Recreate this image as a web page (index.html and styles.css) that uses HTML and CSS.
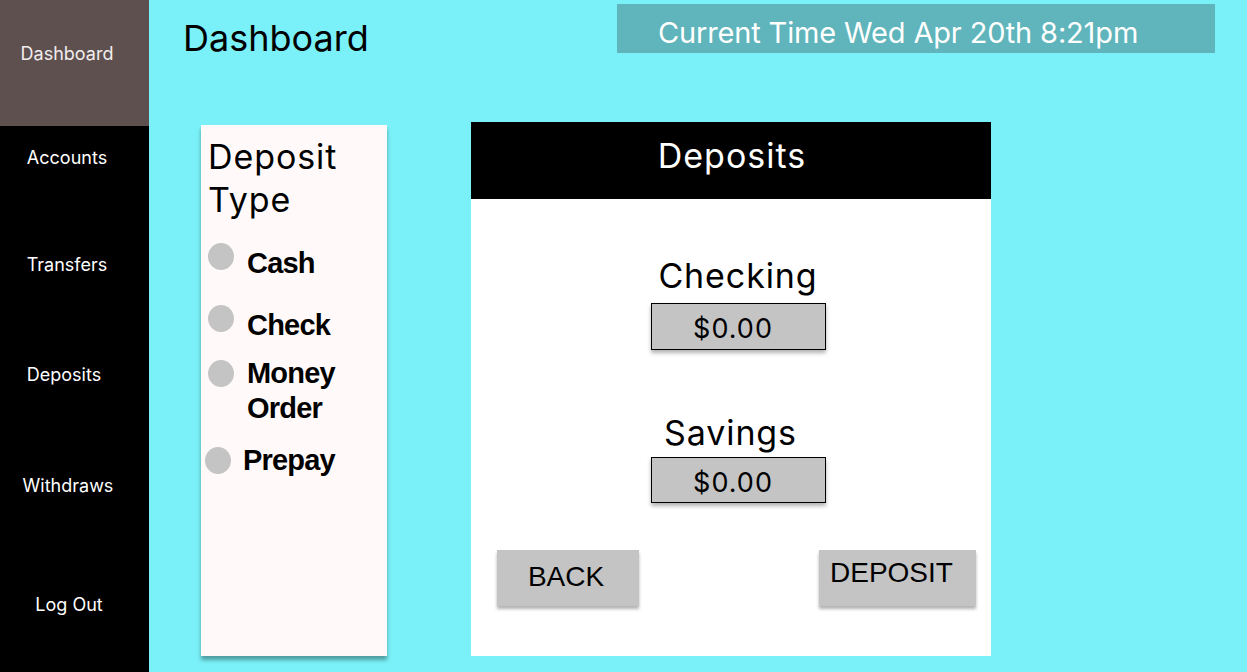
FILE: index.html
```html
<!DOCTYPE html>
<html>
<head>
<meta charset="utf-8">
<link rel="stylesheet" href="styles.css">
</head>
<body>
<div class="app">
  <nav class="sidebar">
    <div class="nav-item active nav-dashboard">Dashboard</div>
    <div class="nav-item nav-accounts">Accounts</div>
    <div class="nav-item nav-transfers">Transfers</div>
    <div class="nav-item nav-deposits">Deposits</div>
    <div class="nav-item nav-withdraws">Withdraws</div>
    <div class="nav-item nav-logout">Log Out</div>
  </nav>
  <main class="main">
    <header class="topbar">
      <h1 class="page-title">Dashboard</h1>
      <div class="clock">Current Time Wed Apr 20th 8:21pm</div>
    </header>
    <section class="content">
      <div class="type-panel">
        <div class="type-title">Deposit Type</div>
        <div class="option opt-cash"><span class="radio"></span><span class="opt-label">Cash</span></div>
        <div class="option opt-check"><span class="radio"></span><span class="opt-label">Check</span></div>
        <div class="option opt-money"><span class="radio"></span><span class="opt-label">Money<br>Order</span></div>
        <div class="option opt-prepay"><span class="radio"></span><span class="opt-label">Prepay</span></div>
      </div>
      <div class="deposit-panel">
        <div class="deposit-head">Deposits</div>
        <div class="deposit-body">
          <div class="account acc-checking">
            <div class="acc-name">Checking</div>
            <div class="amount">$0.00</div>
          </div>
          <div class="account acc-savings">
            <div class="acc-name">Savings</div>
            <div class="amount">$0.00</div>
          </div>
          <div class="actions">
            <div class="btn btn-back">BACK</div>
            <div class="btn btn-deposit">DEPOSIT</div>
          </div>
        </div>
      </div>
    </section>
  </main>
</div>
</body>
</html>
```
FILE: styles.css
```css
* { box-sizing: border-box; }
html, body { margin: 0; padding: 0; }
body {
  width: 1247px;
  height: 672px;
  overflow: hidden;
  font-family: Inter, "Noto Sans", sans-serif;
  background: #7af1f8;
}
.app { display: flex; width: 1247px; height: 672px; }

.sidebar {
  width: 149px;
  flex: none;
  background: #000;
  color: #fff;
  display: flex;
  flex-direction: column;
}
.nav-item {
  font-size: 18px;
  line-height: 20px;
  text-align: center;
  padding-right: 15px;
}
.nav-item.active { background: #5f5050; color: #f2eded; }
.nav-dashboard { height: 126px; padding-top: 44px; }
.nav-accounts { height: 107px; padding-top: 22px; }
.nav-transfers { height: 108px; padding-top: 22px; }
.nav-deposits { height: 111px; padding-top: 24px; padding-right: 21px; }
.nav-withdraws { height: 111px; padding-top: 24px; padding-right: 13px; }
.nav-logout { flex: 1; padding-top: 32px; padding-right: 11px; }

.main { flex: 1; display: flex; flex-direction: column; }
.topbar {
  height: 122px;
  display: flex;
  align-items: flex-start;
}
.page-title {
  margin: 16px 0 0 34px;
  font-size: 36px;
  font-weight: 400;
  line-height: 44px;
  color: #000;
  width: 434px;
}
.clock {
  margin-top: 4px;
  width: 598px;
  height: 49px;
  background: #5fb5bb;
  color: #fff;
  font-size: 29px;
  letter-spacing: -0.15px;
  line-height: 41px;
  padding-left: 41px;
  padding-top: 8px;
  white-space: nowrap;
}

.content {
  display: flex;
  align-items: flex-start;
  padding-left: 52px;
}
.type-panel {
  margin-top: 3px;
  width: 186px;
  height: 531px;
  background: #fffaf9;
  box-shadow: 0 4px 4px rgba(0, 0, 0, 0.35);
  padding: 10px 0 0 7px;
}
.type-title {
  font-size: 34px;
  letter-spacing: 0.9px;
  line-height: 43px;
  color: #000;
  margin-bottom: 22px;
}
.option { display: flex; align-items: flex-start; }
.radio {
  width: 26px;
  height: 27px;
  border-radius: 50%;
  background: #c4c4c4;
  flex: none;
}
.opt-label {
  font-family: "Liberation Sans", Arial, sans-serif;
  font-weight: 700;
  font-size: 29px;
  line-height: 35px;
  letter-spacing: -0.8px;
  color: #000;
  margin-left: 13px;
  margin-top: 3px;
}
.opt-check { margin-top: 24px; }
.opt-money { margin-top: 17px; }
.opt-money .opt-label { margin-top: -4px; }
.opt-prepay { margin-top: 21px; margin-left: -3px; }
.opt-prepay .opt-label { margin-top: -4px; margin-left: 12px; }

.deposit-panel {
  margin-left: 84px;
  width: 520px;
  height: 534px;
  background: #fff;
  display: flex;
  flex-direction: column;
}
.deposit-head {
  height: 77px;
  background: #000;
  color: #fff;
  font-size: 34px;
  letter-spacing: 1px;
  line-height: 68px;
  text-align: center;
  padding-left: 2px;
}
.deposit-body {
  flex: 1;
  display: flex;
  flex-direction: column;
  align-items: center;
}
.account {
  display: flex;
  flex-direction: column;
  align-items: center;
  margin-left: 14px;
}
.acc-checking { margin-top: 55px; }
.acc-savings { margin-top: 61px; }
.acc-name {
  font-size: 34px;
  letter-spacing: 0.9px;
  line-height: 44px;
  color: #000;
  margin-bottom: 5px;
}
.acc-savings .acc-name { margin-bottom: 2px; margin-right: 15px; }
.amount {
  width: 175px;
  height: 47px;
  background: #c4c4c4;
  border: 1.5px solid #000;
  box-shadow: 0 3px 4px rgba(0, 0, 0, 0.3);
  font-size: 27px;
  letter-spacing: 1px;
  line-height: 44px;
  padding-top: 3px;
  padding-right: 10px;
  text-align: center;
  color: #000;
}
.acc-savings .amount { height: 46px; line-height: 43px; }
.actions {
  align-self: stretch;
  display: flex;
  justify-content: space-between;
  padding: 0 15px 0 26px;
  margin-top: 47px;
}
.btn {
  height: 56px;
  background: #c4c4c4;
  box-shadow: 0 3px 3px rgba(0, 0, 0, 0.3);
  font-family: "Liberation Sans", Arial, sans-serif;
  font-size: 28px;
  color: #000;
}
.btn-back { width: 142px; text-align: center; line-height: 54px; padding-right: 4px; }
.btn-deposit { width: 157px; padding-left: 11px; line-height: 46px; }
```
